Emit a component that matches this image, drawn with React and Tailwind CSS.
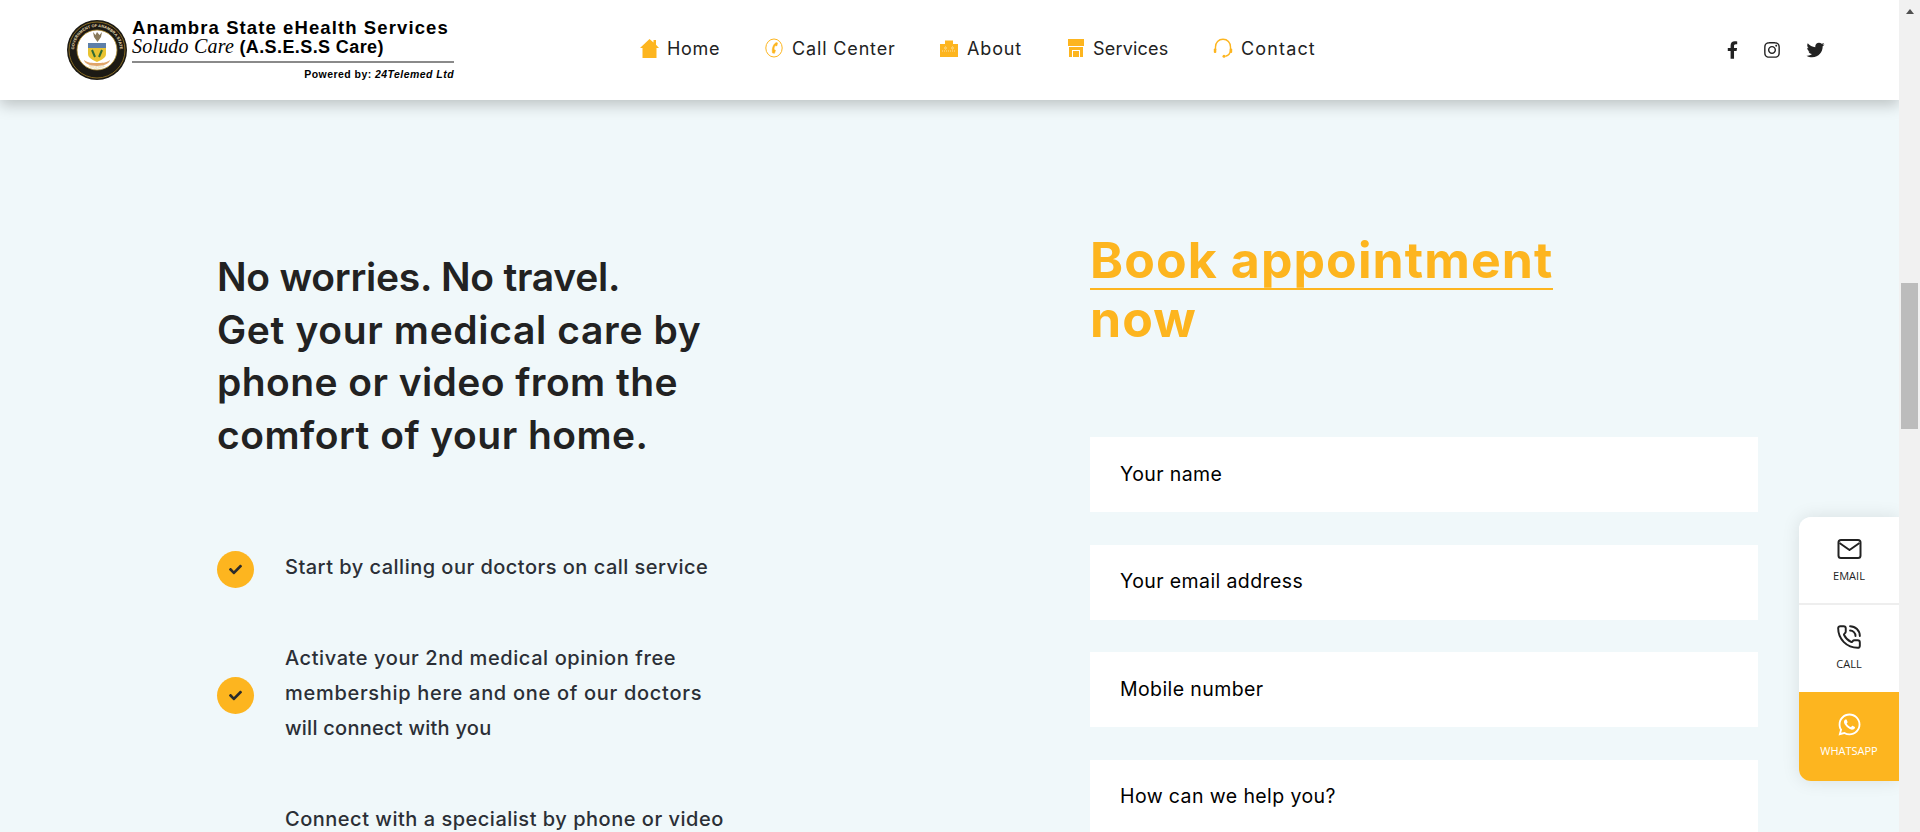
import React from "react";
import { PhoneCall } from "lucide-react";
import { FaWhatsapp, FaFacebookF, FaInstagram, FaTwitter, FaCheck } from "react-icons/fa";

const Y = "#fdb51f";

function Seal() {
  return (
    <svg viewBox="0 0 60 60" className="w-[60px] h-[60px] shrink-0">
      <defs>
        <path id="sealTop" d="M7 30a23 23 0 0 1 46 0" />
        <path id="sealBottom" d="M12 38a20.500 20.500 0 0 0 36 0" />
      </defs>
      <circle cx="30" cy="30" r="30" fill="#1c1a14" />
      <circle cx="30" cy="30" r="28" fill="none" stroke="#b08a2a" strokeWidth="0.7" />
      <circle cx="30" cy="30" r="20" fill="#fff" stroke="#b08a2a" strokeWidth="0.8" />
      <text fontSize="4" fontWeight="700" fill="#e9dcae" fontFamily="Liberation Sans, sans-serif" textAnchor="middle">
        <textPath href="#sealTop" startOffset="50%">GOVERNMENT OF ANAMBRA STATE</textPath>
      </text>
      <text fontSize="4" fontWeight="700" fill="#e9dcae" fontFamily="Liberation Sans, sans-serif" textAnchor="middle">
        <textPath href="#sealBottom" startOffset="50%">NIGERIA</textPath>
      </text>
      <path d="M21 24h18v10c0 4-5 6-9 8-4-2-9-4-9-8z" fill="#e8c332" />
      <rect x="21" y="23" width="18" height="5" fill="#5d7fa8" />
      <path d="M17 40c4 3 8 3 13 3s9 0 13-3c0 3-6 6-13 6s-13-3-13-6z" fill="#e0a56a" />
      <path d="M30 12l2.500 3 2.500-3-1 5-3.500 5-3.500-5-1-5 2.500 3z" fill="#8a7a5a" />
      <path d="M25 30l3 7M35 30l-3 7" stroke="#2f6b34" strokeWidth="2" />
    </svg>
  );
}

const IconHome = () => (
  <svg viewBox="0 0 19 19" className="w-[19px] h-[19px]">
    <path d="M9.500 0L13.500 3.500V1H16V5.800L19 9H16.500V19H2.500V9H0z" fill={Y} />
  </svg>
);
const IconCall = () => (
  <svg viewBox="0 0 18 20" className="w-[18px] h-[20px]" fill="none" stroke={Y}>
    <ellipse cx="9" cy="10" rx="8.200" ry="9" strokeWidth="1" />
    <path d="M11.500 4.500c-3 1-5 6-4 10.500l2 .3c.5-1.200.8-2.200 1-3l-1.500-.8c0-1.500.5-3 1.300-4l1.600.4 .6-3z" fill={Y} strokeWidth="0.5" />
  </svg>
);
const IconAbout = () => (
  <svg viewBox="0 0 18 18" className="w-[18px] h-[18px]">
    <path d="M0 5h5V1.500h8V5h5v13H0z" fill={Y} />
    <path d="M4 9h3M5.500 7.500v3M11 9h3M12.500 7.500v3M2 12h14" stroke="#fff" strokeWidth="0.600" strokeDasharray="1 1" fill="none" />
  </svg>
);
const IconServices = () => (
  <svg viewBox="0 0 16 18" className="w-[16px] h-[18px]">
    <path d="M0 0h16v7H0zM1 8h14v10h-3v-7H4v7H1zM5 12h6v6H5z" fill={Y} />
  </svg>
);
const IconContact = () => (
  <svg viewBox="0 0 20 20" className="w-[20px] h-[20px]" fill="none" stroke={Y} strokeWidth="1.400">
    <path d="M2.500 12V9c0-4.500 3-7.700 7.500-7.700s7.500 3.200 7.500 7.700v3" />
    <path d="M17.500 12c0 3-2 5.500-5 6.300" />
    <rect x="0.800" y="10.500" width="2.500" height="4.500" rx="1" fill={Y} stroke="none" />
    <rect x="16.700" y="10.500" width="2.500" height="4.500" rx="1" fill={Y} stroke="none" />
    <circle cx="11" cy="18.300" r="1.500" fill={Y} stroke="none" />
  </svg>
);

const nav = [
  { label: "Home", icon: <IconHome />, iw: "w-[19px]", gap: "gap-[8px]", text: "w-[52px] tracking-[0.650px]" },
  { label: "Call Center", icon: <IconCall />, iw: "w-[18px]", gap: "gap-[9px]", text: "w-[102px] tracking-[0.850px]" },
  { label: "About", icon: <IconAbout />, iw: "w-[18px]", gap: "gap-[9px]", text: "w-[55px] tracking-[0.850px]" },
  { label: "Services", icon: <IconServices />, iw: "w-[16px]", gap: "gap-[9px]", text: "w-[75px] tracking-[0.200px]" },
  { label: "Contact", icon: <IconContact />, iw: "w-[20px]", gap: "gap-[8px]", text: "w-[73px] tracking-[1.150px]" },
];

function Field({ label }) {
  return (
    <div className="h-[75px] w-[668px] shrink-0 bg-white pl-[30px] flex items-center text-[19.500px] text-black tracking-[0.400px]">
      {label}
    </div>
  );
}

function Check() {
  return (
    <div className="mt-[5px] w-[37px] h-[37px] rounded-full bg-[#fdb51f] flex items-center justify-center shrink-0">
      <FaCheck className="w-[13px] h-[13px] text-[#2b2b2b]" />
    </div>
  );
}

function Widget({ label, icon, className }) {
  return (
    <div className={"flex flex-col items-center justify-start pt-[18px] " + className}>
      <div className="h-[28px] flex items-center justify-center">{icon}</div>
      <div className="mt-[6px] text-[11px] leading-[14px] font-['Open_Sans',sans-serif]">{label}</div>
    </div>
  );
}

export default function App() {
  return (
    <div className="relative flex h-[832px] w-[1920px] overflow-hidden bg-[#f1f1f1] font-['Inter',sans-serif]">
      <div className="relative w-[1899px] h-[832px] overflow-hidden bg-[#f0f8fa]">
        <header className="relative z-10 h-[100px] bg-white flex items-center shadow-[0_5px_14px_rgba(0,0,0,0.22)]">
          <div className="ml-[67px] flex items-center w-[387px] shrink-0">
            <Seal />
            <div className="ml-[5px] w-[322px] font-['Liberation_Sans',sans-serif] text-black">
              <div className="text-[18.500px] leading-[18px] font-bold tracking-[1.100px] whitespace-nowrap">Anambra State eHealth Services</div>
              <div className="text-[18px] leading-[18px] font-bold tracking-[0.400px] whitespace-nowrap">
                <span className="font-['Liberation_Serif',serif] italic font-normal text-[20px] tracking-[0.200px]">Soludo Care</span> (A.S.E.S.S Care)
              </div>
              <div className="h-[2px] bg-[#8a8a8a] mt-[5px]" />
              <div className="text-right text-[10.500px] leading-[14px] font-bold mt-[4px] tracking-[0.450px]">
                Powered by: <span className="italic">24Telemed Ltd</span>
              </div>
            </div>
          </div>
          <nav className="ml-[186px] flex items-center h-[40px] -mt-[4px]">
            {nav.map((n, i) => (
              <div key={n.label} className={"flex items-center " + n.gap + " " + ["mr-[46px]", "mr-[46px]", "mr-[46px]", "mr-[45px]", ""][i]}>
                <div className={"flex items-center justify-center " + n.iw}>{n.icon}</div>
                <span className={"text-[18px] text-[#222] whitespace-nowrap " + n.text}>{n.label}</span>
              </div>
            ))}
          </nav>
          <div className="ml-auto mr-[74px] flex items-center gap-[25px] -mt-[1px] text-[#222]">
            <FaFacebookF className="w-[11px] h-[18px] ml-[1px]" />
            <FaInstagram className="w-[18px] h-[18px]" />
            <FaTwitter className="w-[19px] h-[18px]" />
          </div>
        </header>

        <main className="flex pl-[217px] pt-[130px]">
          <section className="w-[873px] shrink-0 pt-[21px]">
            <h2 className="text-[39px] leading-[52.700px] font-semibold text-[#222] whitespace-nowrap">
              <span className="block tracking-[-0.250px]">No worries. No travel.</span>
              <span className="block tracking-[0.650px]">Get your medical care by</span>
              <span className="block tracking-[0.430px]">phone or video from the</span>
              <span className="block tracking-[0.480px]">comfort of your home.</span>
            </h2>
            <ul className="mt-[88px] text-[20px] leading-[35px] font-medium text-[#2b2f36]">
              <li className="flex items-center gap-[31px] h-[35px]">
                <Check />
                <span className="whitespace-nowrap tracking-[0.480px]">Start by calling our doctors on call service</span>
              </li>
              <li className="flex items-center gap-[31px] mt-[56px]">
                <Check />
                <div className="whitespace-nowrap">
                  <span className="block tracking-[0.580px]">Activate your 2nd medical opinion free</span>
                  <span className="block tracking-[0.700px]">membership here and one of our doctors</span>
                  <span className="block tracking-[0.250px]">will connect with you</span>
                </div>
              </li>
              <li className="pl-[68px] mt-[56px]">
                <span className="whitespace-nowrap tracking-[0.510px]">Connect with a specialist by phone or video</span>
              </li>
            </ul>
          </section>
          <section className="flex flex-col pt-[1px]">
            <h1 className="w-[560px] text-[50px] leading-[59px] font-bold text-[#fdb51f] tracking-[1.100px] whitespace-nowrap">
              <span className="border-b-2 border-[#fdb51f] inline-block leading-[55px]">Book appointment</span><br />now
            </h1>
            <div className="mt-[88px] flex flex-col gap-[32.500px]">
              <Field label="Your name" />
              <Field label="Your email address" />
              <Field label="Mobile number" />
              <Field label="How can we help you?" />
            </div>
          </section>
        </main>

        <aside className="absolute right-0 top-[517px] w-[100px] h-[264px] rounded-l-[12px] overflow-hidden shadow-[0_0_18px_rgba(0,0,0,0.1)] flex flex-col z-20">
          <Widget
            className="h-[88px] bg-white text-[#222] border-b-2 border-[#eeeeee]"
            label="EMAIL"
            icon={
              <svg viewBox="0 0 24 20" className="w-[25px] h-[20px]" fill="none" stroke="#222" strokeWidth="2" strokeLinejoin="round">
                <rect x="1" y="1" width="22" height="18" rx="2.500" />
                <path d="M2 4l10 7 10-7" />
              </svg>
            }
          />
          <Widget
            className="h-[87px] bg-white text-[#222]"
            label="CALL"
            icon={<PhoneCall className="w-[26px] h-[26px] text-[#222]" strokeWidth={1.800} />}
          />
          <Widget
            className="h-[89px] bg-[#fdb51f] text-white"
            label="WHATSAPP"
            icon={<FaWhatsapp className="w-[25px] h-[25px] text-white" />}
          />
        </aside>
      </div>
      <div className="w-[21px] h-[832px] bg-[#f1f1f1] flex flex-col items-center">
        <div className="mt-[9px] h-0 w-0 border-x-[4.500px] border-x-transparent border-b-[5px] border-b-[#505050]" />
        <div className="mt-[269px] h-[146px] w-[17px] bg-[#bcbcbc]" />
      </div>
    </div>
  );
}
